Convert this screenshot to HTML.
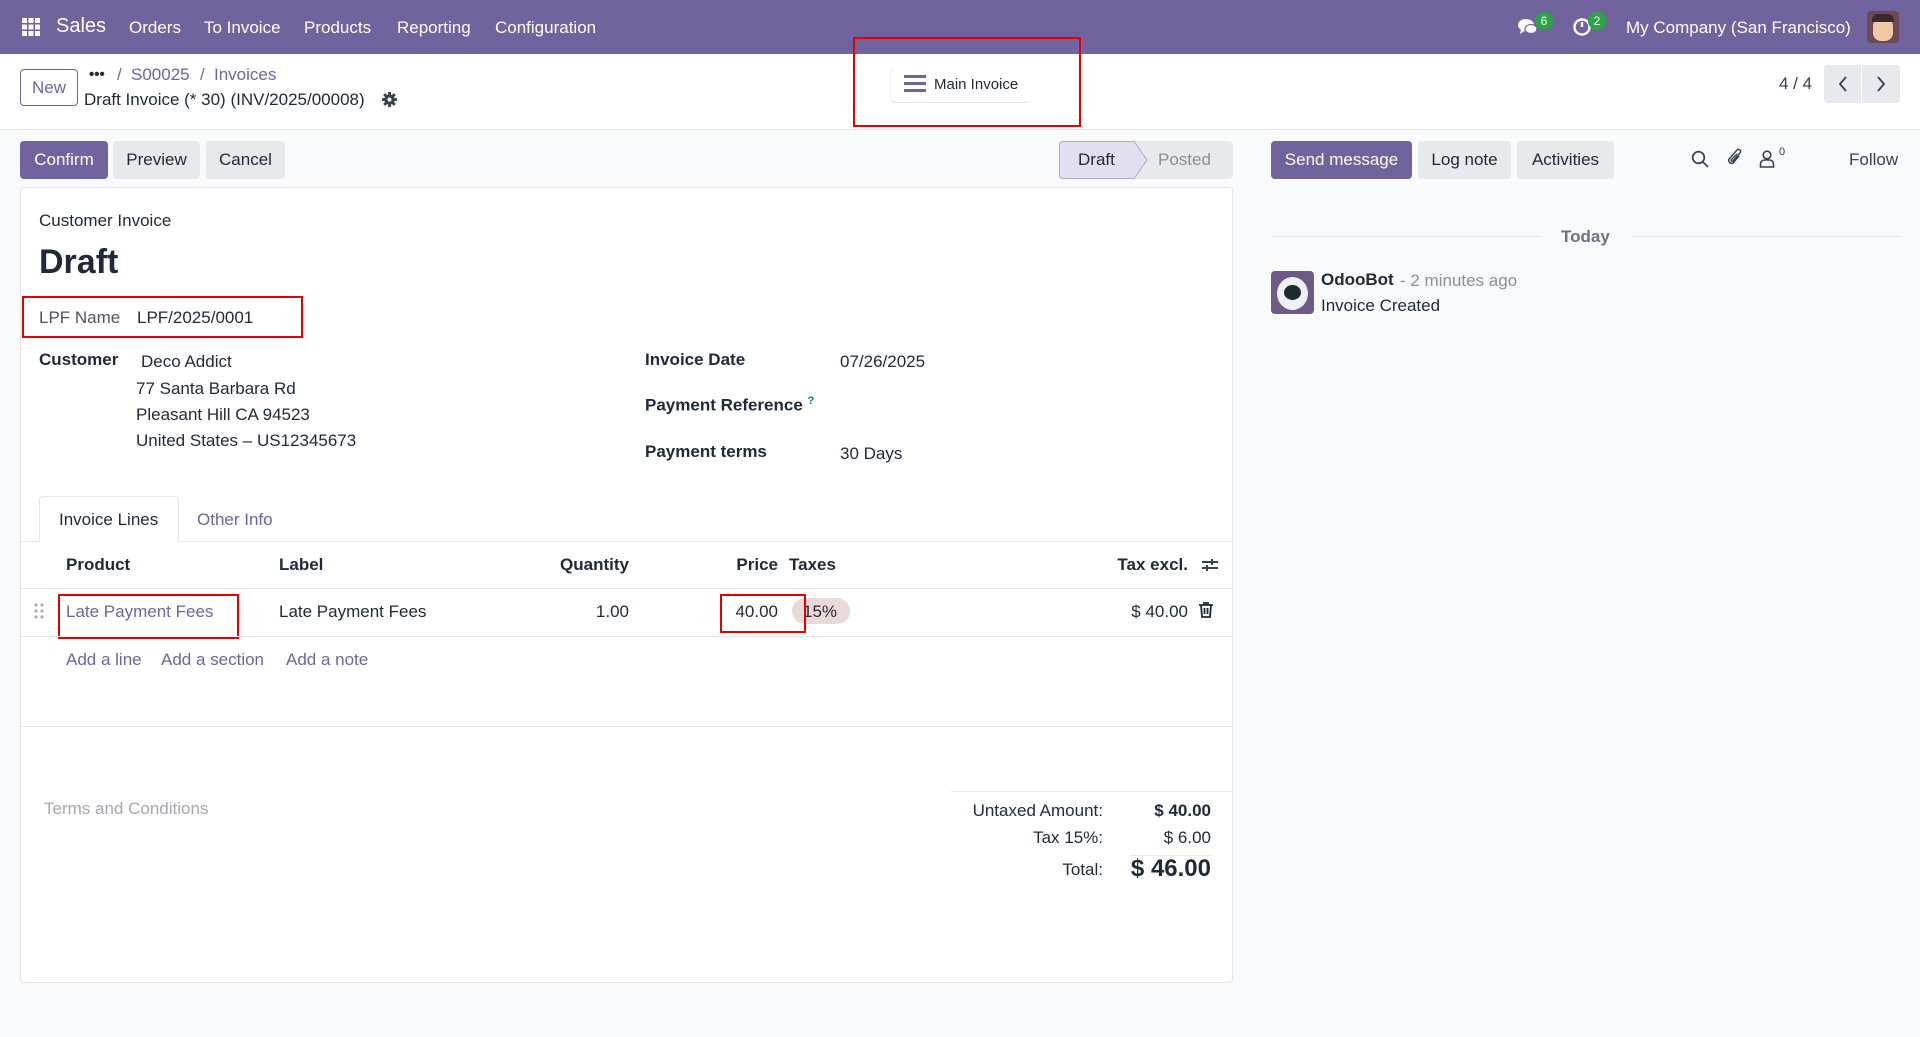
<!DOCTYPE html>
<html><head><meta charset="utf-8"><style>
*{box-sizing:border-box;margin:0;padding:0}
body{width:1920px;height:1037px;background:#f9fafb;font-family:"Liberation Sans",sans-serif;font-size:17px;color:#374151;position:relative;overflow:hidden}
.a{position:absolute;white-space:nowrap}
.nav{position:absolute;left:0;top:0;width:1920px;height:54px;background:#71639e;color:#fff}
.btn{position:absolute;border-radius:4px;display:flex;align-items:center;justify-content:center;font-size:17px}
.p{background:#71639e;color:#fff}
.s{background:#e7e9ed;color:#1f2937}
.lnk{color:#71639e}
.b{font-weight:bold;color:#1f2937}
.r{text-align:right}
.hl{position:absolute;border:2px solid #e50000}
.badge{position:absolute;background:#28a745;color:#fff;font-size:12px;border-radius:9px;width:18px;height:18px;display:flex;align-items:center;justify-content:center}
</style></head><body>
<div class="nav">
 <svg class="a" style="left:22px;top:18px" width="18" height="18" viewBox="0 0 18 18" fill="#fff"><rect x="0" y="0" width="5" height="5"/><rect x="6.5" y="0" width="5" height="5"/><rect x="13" y="0" width="5" height="5"/><rect x="0" y="6.5" width="5" height="5"/><rect x="6.5" y="6.5" width="5" height="5"/><rect x="13" y="6.5" width="5" height="5"/><rect x="0" y="13" width="5" height="5"/><rect x="6.5" y="13" width="5" height="5"/><rect x="13" y="13" width="5" height="5"/></svg>
 <div class="a" style="left:56px;top:15px;font-size:20px">Sales</div>
 <div class="a" style="left:129px;top:18px">Orders</div>
 <div class="a" style="left:204px;top:18px">To Invoice</div>
 <div class="a" style="left:304px;top:18px">Products</div>
 <div class="a" style="left:397px;top:18px">Reporting</div>
 <div class="a" style="left:495px;top:18px">Configuration</div>
 <svg class="a" style="left:1517px;top:17px" width="22" height="20" viewBox="0 0 22 20" fill="#fff"><ellipse cx="9" cy="8" rx="8" ry="6"/><path d="M4 12 L3 17 L9 13Z"/><ellipse cx="14" cy="12" rx="6" ry="4.5" fill="#fff" stroke="#71639e" stroke-width="1.2"/></svg>
 <div class="badge" style="left:1535px;top:12px">6</div>
 <svg class="a" style="left:1572px;top:17px" width="20" height="20" viewBox="0 0 20 20" fill="none" stroke="#fff" stroke-width="2.4"><circle cx="10" cy="10" r="7.5"/><path d="M10 5v5"/></svg>
 <div class="badge" style="left:1588px;top:12px">2</div>
 <div class="a" style="left:1626px;top:18px">My Company (San Francisco)</div>
 <div class="a" style="left:1867px;top:11px;width:32px;height:32px;border-radius:4px;background:#6b4a58"><div style="position:absolute;left:6px;top:6px;width:20px;height:24px;border-radius:9px 9px 8px 8px;background:#f2c9a5"></div><div style="position:absolute;left:5px;top:3px;width:22px;height:8px;border-radius:6px 6px 0 0;background:#3a2a2a"></div></div>
</div>
<div class="a" style="left:0;top:54px;width:1920px;height:76px;background:#fff;border-bottom:1px solid #e5e7eb"></div>
<div class="btn" style="left:20px;top:69px;width:58px;height:37px;border:1px solid #71639e;color:#71639e;background:#fff">New</div>
<div class="a b" style="left:89px;top:66px;font-size:15px">•••</div>
<div class="a" style="left:117px;top:65px;color:#6b7280">/</div>
<div class="a lnk" style="left:131px;top:65px">S00025</div>
<div class="a" style="left:200px;top:65px;color:#6b7280">/</div>
<div class="a lnk" style="left:214px;top:65px">Invoices</div>
<div class="a" style="left:84px;top:90px;color:#1f2937">Draft Invoice (* 30) (INV/2025/00008)</div>
<svg class="a" style="left:382px;top:92px" width="15" height="15" viewBox="0 0 16 16"><circle cx="8" cy="8" r="5.5" fill="#374151"/><g stroke="#374151" stroke-width="3"><path d="M8 0v16M0 8h16M2.3 2.3l11.4 11.4M13.7 2.3L2.3 13.7"/></g><circle cx="8" cy="8" r="2.2" fill="#fff"/></svg>
<div class="a" style="left:890px;top:67px;width:141px;height:36px;border-radius:6px;border-bottom:1px solid #e5e7eb;border-left:1px solid #f0f0f0"></div>
<svg class="a" style="left:904px;top:75px" width="22" height="18" viewBox="0 0 22 18" fill="#71639e"><rect y="0" width="22" height="3"/><rect y="7" width="22" height="3"/><rect y="14" width="22" height="3"/></svg>
<div class="a" style="left:934px;top:76px;font-size:15px;color:#1f2937">Main Invoice</div>
<div class="hl" style="left:853px;top:37px;width:228px;height:90px"></div>
<div class="a" style="left:1779px;top:74px;color:#374151">4 / 4</div>
<div class="btn s" style="left:1824px;top:65px;width:37px;height:38px;border-radius:4px 0 0 4px"><svg width="12" height="18" viewBox="0 0 12 18" fill="none" stroke="#374151" stroke-width="1.8"><path d="M9 2L3 9l6 7"/></svg></div>
<div class="btn s" style="left:1862px;top:65px;width:38px;height:38px;border-radius:0 4px 4px 0"><svg width="12" height="18" viewBox="0 0 12 18" fill="none" stroke="#374151" stroke-width="1.8"><path d="M3 2l6 7-6 7"/></svg></div>

<div class="btn p" style="left:20px;top:141px;width:88px;height:38px">Confirm</div>
<div class="btn s" style="left:113px;top:141px;width:87px;height:38px">Preview</div>
<div class="btn s" style="left:206px;top:141px;width:79px;height:38px">Cancel</div>
<svg class="a" style="left:1059px;top:141px" width="174" height="38" viewBox="0 0 174 38"><rect x="0.5" y="0.5" width="173" height="37" rx="4" fill="#e7e9ed" stroke="#e7e9ed"/><path d="M4 0.5H75L88 19 75 37.5H4A3.5 3.5 0 0 1 0.5 34V4A3.5 3.5 0 0 1 4 0.5Z" fill="#e2e0ee" stroke="#b1a9cf"/></svg>
<div class="a" style="left:1078px;top:150px;color:#1f2937">Draft</div>
<div class="a" style="left:1158px;top:150px;color:#8a8f98">Posted</div>

<div class="a" style="left:20px;top:187px;width:1213px;height:796px;background:#fff;border:1px solid #e5e7eb;border-radius:4px"></div>
<div class="a" style="left:39px;top:211px;color:#1f2937">Customer Invoice</div>
<div class="a b" style="left:39px;top:243px;font-size:34px">Draft</div>
<div class="hl" style="left:22px;top:296px;width:281px;height:42px"></div>
<div class="a" style="left:39px;top:308px;color:#4b5563">LPF Name</div>
<div class="a" style="left:137px;top:308px;color:#1f2937">LPF/2025/0001</div>
<div class="a b" style="left:39px;top:350px">Customer</div>
<div class="a" style="left:141px;top:352px;color:#1f2937">Deco Addict</div>
<div class="a" style="left:136px;top:376px;color:#1f2937;line-height:26px">77 Santa Barbara Rd<br>Pleasant Hill CA 94523<br>United States – US12345673</div>
<div class="a b" style="left:645px;top:350px">Invoice Date</div>
<div class="a" style="left:840px;top:352px;color:#1f2937">07/26/2025</div>
<div class="a b" style="left:645px;top:395px">Payment Reference <sup style="color:#017e84;font-size:11px">?</sup></div>
<div class="a b" style="left:645px;top:442px">Payment terms</div>
<div class="a" style="left:840px;top:444px;color:#1f2937">30 Days</div>

<div class="a" style="left:21px;top:541px;width:1211px;border-top:1px solid #e5e7eb"></div>
<div class="a" style="left:39px;top:496px;width:140px;height:46px;background:#fff;border:1px solid #e5e7eb;border-bottom:none;border-radius:4px 4px 0 0"></div>
<div class="a" style="left:59px;top:510px;color:#1f2937">Invoice Lines</div>
<div class="a lnk" style="left:197px;top:510px">Other Info</div>

<div class="a b" style="left:66px;top:555px">Product</div>
<div class="a b" style="left:279px;top:555px">Label</div>
<div class="a b r" style="left:529px;top:555px;width:100px">Quantity</div>
<div class="a b r" style="left:678px;top:555px;width:100px">Price</div>
<div class="a b" style="left:789px;top:555px">Taxes</div>
<div class="a b r" style="left:1088px;top:555px;width:100px">Tax excl.</div>
<svg class="a" style="left:1201px;top:556px" width="18" height="18" viewBox="0 0 18 18" stroke="#374151" stroke-width="2"><path d="M1 6h16M1 12h16"/><path d="M11 3v6M6 9v6"/></svg>
<div class="a" style="left:21px;top:588px;width:1211px;border-top:1px solid #e5e7eb"></div>
<svg class="a" style="left:34px;top:603px" width="10" height="16" viewBox="0 0 10 16" fill="#aab0b8"><circle cx="2" cy="2" r="1.6"/><circle cx="8" cy="2" r="1.6"/><circle cx="2" cy="8" r="1.6"/><circle cx="8" cy="8" r="1.6"/><circle cx="2" cy="14" r="1.6"/><circle cx="8" cy="14" r="1.6"/></svg>
<div class="a lnk" style="left:66px;top:602px">Late Payment Fees</div>
<div class="hl" style="left:58px;top:594px;width:181px;height:45px"></div>
<div class="a" style="left:279px;top:602px;color:#1f2937">Late Payment Fees</div>
<div class="a r" style="left:529px;top:602px;width:100px;color:#1f2937">1.00</div>
<div class="a" style="left:792px;top:598px;width:58px;height:26px;border-radius:13px;background:#ead9d9"></div>
<div class="a r" style="left:678px;top:602px;width:100px;color:#1f2937">40.00</div>
<div class="a" style="left:803px;top:602px;color:#1f2937">15%</div>
<div class="hl" style="left:720px;top:594px;width:86px;height:39px"></div>
<div class="a r" style="left:1088px;top:602px;width:100px;color:#1f2937">$ 40.00</div>
<svg class="a" style="left:1199px;top:602px" width="14" height="16" viewBox="0 0 14 16" fill="none" stroke="#1f2937" stroke-width="1.8"><path d="M0 3h14M5 3V1h4v2M2 3l1 12h8l1-12M5.5 6v6M8.5 6v6"/></svg>
<div class="a" style="left:21px;top:636px;width:1211px;border-top:1px solid #e5e7eb"></div>
<div class="a lnk" style="left:66px;top:650px">Add a line</div>
<div class="a lnk" style="left:161px;top:650px">Add a section</div>
<div class="a lnk" style="left:286px;top:650px">Add a note</div>
<div class="a" style="left:21px;top:726px;width:1211px;border-top:1px solid #e5e7eb"></div>
<div class="a" style="left:44px;top:799px;color:#a3a8b0">Terms and Conditions</div>
<div class="a" style="left:951px;top:791px;width:281px;border-top:1px solid #e5e7eb"></div>
<div class="a r" style="left:903px;top:801px;width:200px;color:#1f2937">Untaxed Amount:</div>
<div class="a r b" style="left:1051px;top:801px;width:160px">$ 40.00</div>
<div class="a r" style="left:903px;top:828px;width:200px;color:#1f2937">Tax 15%:</div>
<div class="a r" style="left:1051px;top:828px;width:160px;color:#1f2937">$ 6.00</div>
<div class="a" style="left:1130px;top:855px;width:81px;border-top:1px solid #e5e7eb"></div>
<div class="a r" style="left:903px;top:860px;width:200px;color:#1f2937">Total:</div>
<div class="a r b" style="left:1011px;top:855px;width:200px;font-size:24px">$ 46.00</div>

<div class="btn p" style="left:1271px;top:141px;width:141px;height:38px">Send message</div>
<div class="btn s" style="left:1418px;top:141px;width:93px;height:38px">Log note</div>
<div class="btn s" style="left:1517px;top:141px;width:97px;height:38px">Activities</div>
<svg class="a" style="left:1691px;top:150px" width="18" height="18" viewBox="0 0 18 18" fill="none" stroke="#374151" stroke-width="1.7"><circle cx="7.5" cy="7.5" r="5.8"/><path d="M12 12l5 5"/></svg>
<svg class="a" style="left:1726px;top:148px" width="18" height="20" viewBox="0 0 18 20" fill="none" stroke="#374151" stroke-width="1.5"><path d="M13 8l-6 7a3 3 0 0 1-4-4l8-9a2 2 0 0 1 3 3l-7 8a1 1 0 0 1-1.5-1.5L11 6"/></svg>
<svg class="a" style="left:1759px;top:150px" width="16" height="18" viewBox="0 0 16 18" fill="none" stroke="#374151" stroke-width="1.6"><circle cx="8" cy="5" r="3.8"/><path d="M1.5 17v-3a4 4 0 0 1 4-4h5a4 4 0 0 1 4 4v3z"/></svg>
<div class="a" style="left:1779px;top:146px;font-size:11px">0</div>
<div class="a" style="left:1849px;top:150px">Follow</div>
<div class="a" style="left:1271px;top:236px;width:269px;border-top:1px solid #e5e7eb"></div>
<div class="a" style="left:1632px;top:236px;width:268px;border-top:1px solid #e5e7eb"></div>
<div class="a b" style="left:1561px;top:227px;color:#6b7280">Today</div>
<div class="a" style="left:1271px;top:271px;width:43px;height:43px;border-radius:4px;background:#6e5a86;overflow:hidden"><div style="position:absolute;left:6px;top:6px;width:31px;height:33px;border-radius:50%;background:#eef0f3"></div><div style="position:absolute;left:13px;top:14px;width:17px;height:15px;border-radius:50%;background:#1e2a30"></div></div>
<div class="a b" style="left:1321px;top:270px">OdooBot</div>
<div class="a" style="left:1400px;top:271px;color:#8a8f98">- 2 minutes ago</div>
<div class="a" style="left:1321px;top:296px;color:#1f2937">Invoice Created</div>
</body></html>
